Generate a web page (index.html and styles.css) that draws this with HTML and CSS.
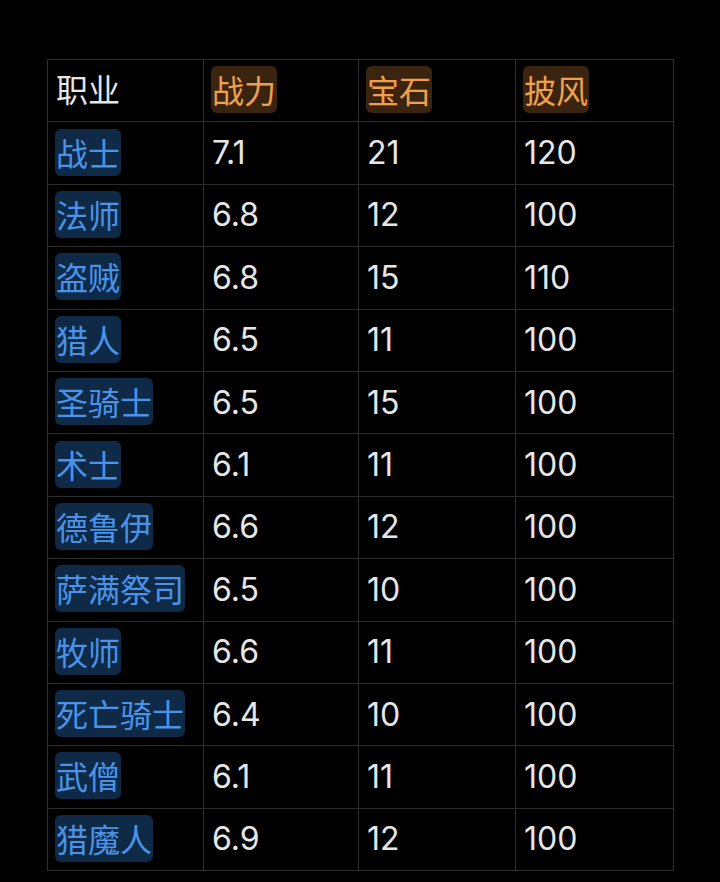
FILE: index.html
```html
<!DOCTYPE html>
<html lang="zh">
<head>
<meta charset="utf-8">
<link rel="stylesheet" href="styles.css">
</head>
<body>
<table class="grid">
  <colgroup><col class="c1"><col class="c2"><col class="c3"><col class="c4"></colgroup>
  <tr><td>职业</td><td><span class="tag-o">战力</span></td><td><span class="tag-o">宝石</span></td><td><span class="tag-o">披风</span></td></tr>
  <tr><td><span class="tag-b">战士</span></td><td>7.1</td><td>21</td><td>120</td></tr>
  <tr><td><span class="tag-b">法师</span></td><td>6.8</td><td>12</td><td>100</td></tr>
  <tr><td><span class="tag-b">盗贼</span></td><td>6.8</td><td>15</td><td>110</td></tr>
  <tr><td><span class="tag-b">猎人</span></td><td>6.5</td><td>11</td><td>100</td></tr>
  <tr><td><span class="tag-b">圣骑士</span></td><td>6.5</td><td>15</td><td>100</td></tr>
  <tr><td><span class="tag-b">术士</span></td><td>6.1</td><td>11</td><td>100</td></tr>
  <tr><td><span class="tag-b">德鲁伊</span></td><td>6.6</td><td>12</td><td>100</td></tr>
  <tr><td><span class="tag-b">萨满祭司</span></td><td>6.5</td><td>10</td><td>100</td></tr>
  <tr><td><span class="tag-b">牧师</span></td><td>6.6</td><td>11</td><td>100</td></tr>
  <tr><td><span class="tag-b">死亡骑士</span></td><td>6.4</td><td>10</td><td>100</td></tr>
  <tr><td><span class="tag-b">武僧</span></td><td>6.1</td><td>11</td><td>100</td></tr>
  <tr><td><span class="tag-b">猎魔人</span></td><td>6.9</td><td>12</td><td>100</td></tr>
</table>
</body>
</html>
```
FILE: styles.css
```css
html, body {
  margin: 0;
  padding: 0;
  background: #000;
}
body {
  padding: 59px 0 0 47px;
  font-family: "Inter", "Noto Sans CJK SC", sans-serif;
  color: #e6e6e6;
}
.grid {
  border-collapse: collapse;
  table-layout: fixed;
  width: 626px;
}
.c1 { width: 156px; }
.c2 { width: 155px; }
.c3 { width: 157px; }
.c4 { width: 158px; }
.grid td {
  border: 1px solid #2e2e2e;
  height: 62.4px;
  padding: 0 8px;
  box-sizing: border-box;
  vertical-align: middle;
  font-size: 32px;
  line-height: 46px;
  white-space: nowrap;
}
.tag-o, .tag-b {
  display: inline-block;
  padding: 0 1px 1px;
  margin-left: -1px;
  border-radius: 6px;
  font-family: "Noto Sans CJK SC", sans-serif;
  line-height: 46px;
}
.tag-o {
  background: #3a2410;
  color: #f0a04c;
}
.tag-b {
  background: #0e2a47;
  color: #4a93e8;
}
```
